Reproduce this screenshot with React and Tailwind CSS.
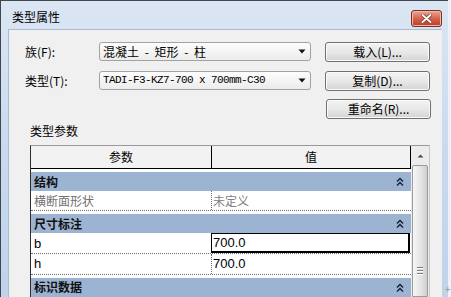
import React from "react";

function Chevrons() {
  return (
    <svg width="8" height="9" viewBox="0 0 8 9" fill="none" stroke="#16243e" strokeWidth="1.5">
      <polyline points="1,4.5 4,1.5 7,4.5" />
      <polyline points="1,8.5 4,5.5 7,8.5" />
    </svg>
  );
}

function DownArrow() {
  return (
    <svg width="8" height="5" viewBox="0 0 8 5">
      <polygon points="0.5,0.5 7.5,0.5 4,4.5" fill="#111" />
    </svg>
  );
}

function Combo({ children, mono }) {
  return (
    <div className="w-[212px] h-[19px] rounded-[3px] border border-[#a2a2a2] bg-gradient-to-b from-[#fdfdfd] to-[#ececec] flex items-center justify-between pl-[3px] pr-[4px]">
      <span
        className={
          mono
            ? "font-['Liberation_Mono',monospace] text-[11px] tracking-[-0.6px] text-black"
            : "text-[12px] text-black [word-spacing:3px]"
        }
      >
        {children}
      </span>
      <DownArrow />
    </div>
  );
}

function Btn({ children }) {
  return (
    <button className="w-[105px] h-[20px] rounded-[3px] border border-[#707070] bg-gradient-to-b from-[#f3f3f3] via-[#e8e8e8] to-[#d4d4d4] text-[12px] leading-none text-black shadow-[inset_0_0_0_1px_#fbfbfb]">
      {children}
    </button>
  );
}

function GroupRow({ label }) {
  return (
    <div className="mt-[3px] h-[20px] bg-[#9cb4d2] flex items-center justify-between pl-[3px] pr-[7px]">
      <span className="text-[12px] font-bold text-[#101010]">{label}</span>
      <Chevrons />
    </div>
  );
}

function ParamRow({ name, value, muted, editing }) {
  const nameCls = muted
    ? "text-[12px] text-[#707070]"
    : "font-['Liberation_Sans',sans-serif] text-[13px] text-black";
  const valCls = muted
    ? "text-[12px] text-[#808080]"
    : "font-['Liberation_Sans',sans-serif] text-[13px] text-black";
  return (
    <div className="h-[21px] flex bg-white border-b border-dotted border-[#6f6f6f]">
      <div
        className={`${editing ? "w-[180px]" : "w-[181px] border-r border-dotted border-[#6f6f6f]"} pl-[3px] flex items-center`}
      >
        <span className={nameCls}>{name}</span>
      </div>
      <div
        className={`${editing ? "w-[199px] h-[20px] border border-black border-r-2 border-b-2 pl-px" : "flex-1 pl-px"} flex items-center`}
      >
        <span className={valCls}>{value}</span>
      </div>
    </div>
  );
}

export default function App() {
  return (
    <div className="relative w-[451px] h-[297px] overflow-hidden bg-[#eef1f5] font-['Noto_Sans_CJK_SC','Noto_Sans',sans-serif]">
      <div className="w-[448px] h-[297px] border-l border-t border-[#3f4650] bg-gradient-to-b from-[#dbe6f3] via-[#c9daef] to-[#c0d3eb] flex flex-col">
        {/* title bar */}
        <div className="h-[28px] flex items-start justify-between pl-[11px] pr-[6px]">
          <span className="mt-[9px] text-[12px] leading-[14px] text-black">类型属性</span>
          <div className="mt-[9px] w-[31px] h-[17px] rounded-[3px] border border-[#7d2e22] bg-gradient-to-b from-[#e9a596] via-[#d4644c] to-[#bd3b24] flex items-center justify-center shadow-[inset_0_0_0_1px_#f0b8aa]">
            <svg width="11" height="9" viewBox="0 0 11 9">
              <path d="M1.5 1 L9.5 8 M9.5 1 L1.5 8" stroke="#6b2418" strokeWidth="3.2" strokeLinecap="round" />
              <path d="M1.5 1 L9.5 8 M9.5 1 L1.5 8" stroke="#ffffff" strokeWidth="2" strokeLinecap="round" />
            </svg>
          </div>
        </div>

        {/* client area */}
        <div className="flex-1 ml-[7px] mr-[6px] bg-[#f0f0f0] border-l border-t border-[#a9bbd2] flex flex-col overflow-hidden text-[12px]">
          <div className="mt-[12px] flex items-start pl-[16px]">
            <span className="w-[74px] pt-[1px] leading-[17px]">族(F):</span>
            <Combo>混凝土 - 矩形 - 柱</Combo>
            <div className="ml-[14px]">
              <Btn>载入(L)...</Btn>
            </div>
          </div>
          <div className="mt-[9px] flex items-start pl-[16px]">
            <span className="w-[74px] pt-[1px] leading-[17px]">类型(T):</span>
            <Combo mono>TADI-F3-KZ7-700 x 700mm-C30</Combo>
            <div className="ml-[14px]">
              <Btn>复制(D)...</Btn>
            </div>
          </div>
          <div className="mt-[8px] flex justify-end pr-[11px]">
            <Btn>重命名(R)...</Btn>
          </div>

          <div className="mt-[5px] pl-[21px] leading-[14px]">类型参数</div>

          {/* parameter table */}
          <div className="mt-[7px] ml-[21px] w-[400px] flex-1 flex border-l border-t border-r border-l-[#2e2e2e] border-t-[#9a9a9a] border-r-[#c9c9c9] bg-white overflow-hidden">
            <div className="w-[380px] flex flex-col">
              <div className="h-[24px] flex bg-[#f2f2f2] border-b border-black">
                <div className="w-[181px] border-r border-black flex items-center justify-center">参数</div>
                <div className="flex-1 border-r border-black flex items-center justify-center">值</div>
              </div>
              <GroupRow label="结构" />
              <ParamRow name="横断面形状" value="未定义" muted />
              <GroupRow label="尺寸标注" />
              <ParamRow name="b" value="700.0" editing />
              <ParamRow name="h" value="700.0" />
              <GroupRow label="标识数据" />
            </div>

            {/* scrollbar */}
            <div className="w-[18px] bg-[#ececec] flex flex-col items-center">
              <div className="h-[19px] w-full flex items-center justify-center">
                <svg width="7" height="4" viewBox="0 0 7 4">
                  <polygon points="0.5,3.5 6.5,3.5 3.5,0.5" fill="#4a4a4a" />
                </svg>
              </div>
              <div className="w-[16px] flex-1 rounded-t-[2px] border border-[#9b9b9b] bg-gradient-to-r from-[#f6f6f6] via-[#e6e6e6] to-[#cfcfcf] flex flex-col items-center pt-[101px] gap-[2px]">
                <div className="w-[6px] h-px bg-[#7c7c7c] shadow-[0_1px_0_#ffffff]" />
                <div className="w-[6px] h-px bg-[#7c7c7c] shadow-[0_1px_0_#ffffff]" />
                <div className="w-[6px] h-px bg-[#7c7c7c] shadow-[0_1px_0_#ffffff]" />
              </div>
            </div>
          </div>
        </div>
      </div>
      <span className="absolute left-[445px] top-[284px] text-[10px] leading-none text-[#9a9a9a]">+</span>
    </div>
  );
}
